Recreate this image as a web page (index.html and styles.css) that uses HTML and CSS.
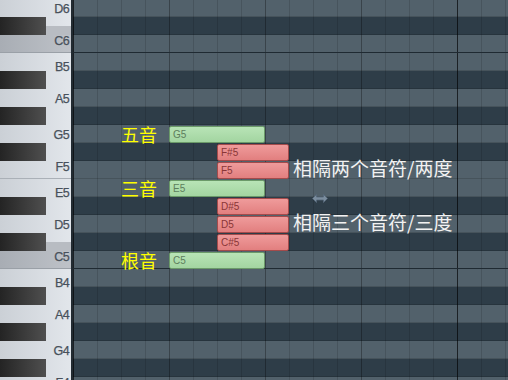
FILE: index.html
```html
<!DOCTYPE html>
<html lang="zh">
<head>
    <meta charset="UTF-8">
    <title>Piano Roll - 三和弦</title>
    <link rel="stylesheet" href="styles.css">
</head>
<body>
    <div class="roll">
        <div class="keys">
            <div class="key"><span class="key-name">D6</span></div>
            <div class="key c-top"><i class="black-key"></i></div>
            <div class="key c octave"><span class="key-name up">C6</span></div>
            <div class="key"><span class="key-name down">B5</span></div>
            <div class="key"><i class="black-key"></i></div>
            <div class="key"><span class="key-name">A5</span></div>
            <div class="key"><i class="black-key"></i></div>
            <div class="key"><span class="key-name">G5</span></div>
            <div class="key"><i class="black-key"></i></div>
            <div class="key ef"><span class="key-name up">F5</span></div>
            <div class="key"><span class="key-name down">E5</span></div>
            <div class="key"><i class="black-key"></i></div>
            <div class="key"><span class="key-name">D5</span></div>
            <div class="key c-top"><i class="black-key"></i></div>
            <div class="key c octave"><span class="key-name up">C5</span></div>
            <div class="key"><span class="key-name down">B4</span></div>
            <div class="key"><i class="black-key"></i></div>
            <div class="key"><span class="key-name">A4</span></div>
            <div class="key"><i class="black-key"></i></div>
            <div class="key"><span class="key-name">G4</span></div>
            <div class="key"><i class="black-key"></i></div>
            <div class="key ef"><span class="key-name up">F4</span></div>
        </div>

        <div class="grid">
            <div class="row"></div>
            <div class="row dark"></div>
            <div class="row octave"></div>
            <div class="row"></div>
            <div class="row dark"></div>
            <div class="row"></div>
            <div class="row dark"></div>
            <div class="row">
                <span class="tone">五音</span>
                <div class="note green">G5</div>
            </div>
            <div class="row dark">
                <div class="note red">F#5</div>
            </div>
            <div class="row">
                <div class="note red">F5</div>
                <span class="interval">相隔两个音符/两度</span>
            </div>
            <div class="row">
                <span class="tone">三音</span>
                <div class="note green">E5</div>
            </div>
            <div class="row dark">
                <div class="note red">D#5</div>
            </div>
            <div class="row">
                <div class="note red">D5</div>
                <span class="interval">相隔三个音符/三度</span>
            </div>
            <div class="row dark">
                <div class="note red">C#5</div>
            </div>
            <div class="row octave">
                <span class="tone">根音</span>
                <div class="note green">C5</div>
            </div>
            <div class="row"></div>
            <div class="row dark"></div>
            <div class="row"></div>
            <div class="row dark"></div>
            <div class="row"></div>
            <div class="row dark"></div>
            <div class="row"></div>
        </div>

        <!-- resize cursor left on the canvas -->
        <svg class="cursor" width="16" height="9" viewBox="0 0 16 9">
            <path d="M0.5 4.5 L4.5 0.5 V3 H11.5 V0.5 L15.5 4.5 L11.5 8.5 V6 H4.5 V8.5 Z" fill="#7b8d9e" stroke="#56687a" stroke-width="0.8"/>
        </svg>
    </div>
</body>
</html>
```

FILE: styles.css
```css
body {
    margin: 0;
    width: 508px;
    height: 380px;
    overflow: hidden;
    background: #2d3c47;
    font-family: 'Liberation Sans', Arial, sans-serif;
}
.roll {
    position: relative;
    display: flex;
    height: 380px;
    overflow: hidden;
}

/* keyboard */
.keys {
    flex: none;
    width: 71px;
    margin-top: -1px;
    background: linear-gradient(to right, #cbd0d6, #e2e6eb);
    border-right: 2px solid #222b32;
}
.key {
    display: flex;
    align-items: center;
    height: 18px;
    box-sizing: border-box;
}
.key.c {
    background: linear-gradient(to right, #a8adb4, #bec2c8);
}
.key.c-top {
    background: linear-gradient(to bottom, transparent 50%, #b8bcc2 50%);
}
.key.octave {
    border-bottom: 1px solid #9aa0a7;
}
.key.ef {
    border-bottom: 1px solid #aab0b7;
}
.black-key {
    width: 46px;
    height: 100%;
    background: linear-gradient(to right, #242424, #4f4f4f);
}
.key-name {
    margin-left: auto;
    margin-right: 2px;
    margin-top: 1px;
    font-size: 12.5px;
    letter-spacing: -0.6px;
    color: #48515b;
    -webkit-text-stroke: 0.25px #48515b;
}
.key-name.up {
    margin-top: 0;
    margin-bottom: 6px;
}
.key-name.down {
    margin-top: 10px;
}

/* note grid */
.grid {
    flex: 1;
    margin-top: -1px;
}
.row {
    display: grid;
    grid-template-columns: repeat(19, 24px);
    height: 18px;
    box-sizing: border-box;
    border-bottom: 1px solid rgba(0, 0, 0, 0.14);
    background-color: #52616b;
    background-image:
        linear-gradient(to right, rgba(0, 0, 0, 0.5) 1px, transparent 1px),
        linear-gradient(to right, rgba(0, 0, 0, 0.2) 1px, transparent 1px),
        linear-gradient(to right, rgba(0, 0, 0, 0.13) 1px, transparent 1px);
    background-size: 384px 100%, 96px 100%, 24px 100%;
}
.row.dark {
    background-color: #2e3d48;
}
.row.octave {
    border-bottom-color: #1f2a32;
}
.row > * {
    grid-row: 1;
}

.note {
    align-self: start;
    height: 17px;
    margin-top: 1px;
    box-sizing: border-box;
    padding-left: 3px;
    border: 1px solid;
    border-radius: 2px;
    font-size: 10px;
    line-height: 15px;
}
.note.green {
    grid-column: 5 / span 4;
    background: linear-gradient(#b8e4b6, #a3d5a1);
    border-color: #6b9a69;
    color: #5d7e5c;
}
.note.red {
    grid-column: 7 / span 3;
    background: linear-gradient(#ef9b9b, #e27f7f);
    border-color: #a44b4b;
    color: #8a3636;
}

.tone,
.interval {
    font-family: 'Noto Sans CJK SC', sans-serif;
    font-size: 18px;
    line-height: 18px;
    white-space: nowrap;
}
.tone {
    grid-column: 3 / span 2;
    color: #ffff00;
}
.interval {
    grid-column: 10 / span 9;
    padding-left: 4px;
    margin-top: -2px;
    font-size: 19px;
    color: #f2f2f2;
}

.cursor {
    position: absolute;
    left: 312px;
    top: 194px;
}
```
